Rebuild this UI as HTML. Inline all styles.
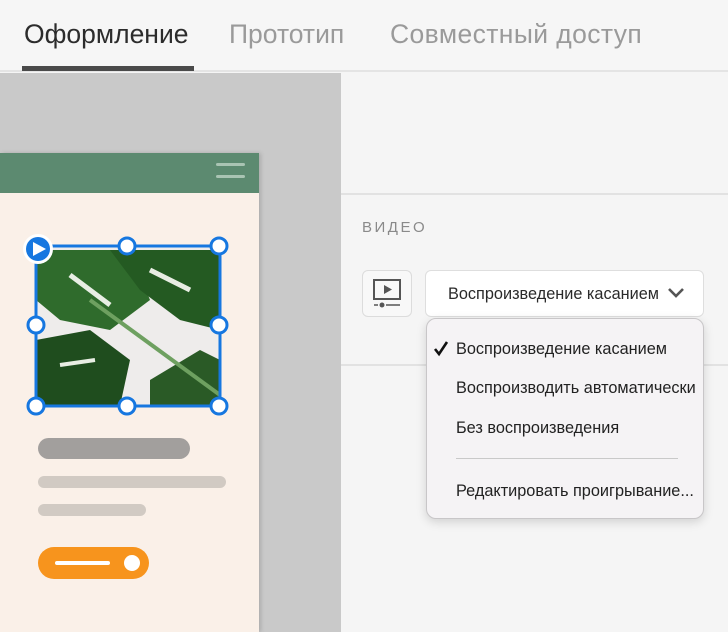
<!DOCTYPE html>
<html><head><meta charset="utf-8"><style>
*{margin:0;padding:0;box-sizing:border-box}
body{width:728px;height:632px;overflow:hidden;background:#f5f5f5;font-family:"Liberation Sans","DejaVu Sans",sans-serif;position:relative}
.abs{position:absolute}
.tab{position:absolute;top:19px;font-size:26.5px;color:#9a9a9a}
.mi{position:absolute;left:29px;font-size:16.3px;color:#222}
</style></head><body>
<div class="abs" style="left:0;top:0;width:728px;height:72px;background:#f6f6f6;border-bottom:2px solid #e4e4e4"></div>
<div class="tab" style="left:24px;color:#2c2c2c">Оформление</div>
<div class="tab" style="left:229px">Прототип</div>
<div class="tab" style="left:390px;letter-spacing:0.4px">Совместный доступ</div>
<div class="abs" style="left:22px;top:66px;width:172px;height:5px;background:#4a4a4a"></div>

<div class="abs" style="left:0;top:73px;width:341px;height:559px;background:#c9c9c9"></div>
<div class="abs" style="left:0;top:153px;width:259px;height:479px;background:#faf0e8;box-shadow:2px 0 4px rgba(0,0,0,.15)"></div>
<div class="abs" style="left:0;top:153px;width:259px;height:40px;background:#5c8a70"></div>
<div class="abs" style="left:216px;top:163px;width:29px;height:3px;border-radius:2px;background:#a9c4b3"></div>
<div class="abs" style="left:216px;top:175px;width:29px;height:3px;border-radius:2px;background:#a9c4b3"></div>

<svg class="abs" style="left:0;top:230px" width="260" height="195" viewBox="0 230 260 195">
<rect x="36" y="246" width="184" height="160" fill="#eeeceb"/>
<path d="M36 250 L130 250 L150 300 L110 330 L60 320 L36 300Z" fill="#2f6b2c"/>
<path d="M110 250 L220 250 L220 330 L180 320 L140 290Z" fill="#245a22"/>
<path d="M36 340 L90 330 L130 360 L120 406 L36 406Z" fill="#1f4d1e"/>
<path d="M150 380 L200 350 L220 360 L220 406 L150 406Z" fill="#2a5a26"/>
<path d="M90 300 L220 395" stroke="#6ea060" stroke-width="4"/>
<path d="M70 275 L110 305" stroke="#e8eee4" stroke-width="5"/>
<path d="M150 270 L190 290" stroke="#e8eee4" stroke-width="5"/>
<path d="M60 365 L95 360" stroke="#e8eee4" stroke-width="4"/>
<rect x="36" y="246" width="184" height="160" fill="none" stroke="#1677e0" stroke-width="3"/>
<g fill="#fff" stroke="#1677e0" stroke-width="3">
<circle cx="127" cy="246" r="8"/><circle cx="219" cy="246" r="8"/>
<circle cx="36" cy="325" r="8"/><circle cx="219" cy="325" r="8"/>
<circle cx="36" cy="406" r="8"/><circle cx="127" cy="406" r="8"/><circle cx="219" cy="406" r="8"/>
</g>
<circle cx="38" cy="249" r="15" fill="#fff"/><circle cx="38" cy="249" r="12" fill="#1677e0"/>
<path d="M33 242 L46 249 L33 256Z" fill="#fff"/>
</svg>

<div class="abs" style="left:38px;top:438px;width:152px;height:21px;border-radius:11px;background:#a29f9d"></div>
<div class="abs" style="left:38px;top:476px;width:188px;height:12px;border-radius:6px;background:#d1cac3"></div>
<div class="abs" style="left:38px;top:504px;width:108px;height:12px;border-radius:6px;background:#d1cac3"></div>
<div class="abs" style="left:38px;top:547px;width:111px;height:32px;border-radius:16px;background:#f7941d"></div>
<div class="abs" style="left:55px;top:561px;width:55px;height:4px;border-radius:2px;background:#fff"></div>
<div class="abs" style="left:124px;top:555px;width:16px;height:16px;border-radius:50%;background:#fff"></div>

<div class="abs" style="left:341px;top:193px;width:387px;height:2px;background:#e2e2e2"></div>
<div class="abs" style="left:341px;top:364px;width:387px;height:2px;background:#e2e2e2"></div>
<div class="abs" style="left:362px;top:219px;font-size:15px;letter-spacing:2.5px;color:#8a8a8a">ВИДЕО</div>
<div class="abs" style="left:362px;top:270px;width:50px;height:47px;border:1px solid #dcdcdc;border-radius:6px;background:#f8f8f8"></div>
<svg class="abs" style="left:370px;top:277px" width="34" height="34" viewBox="0 0 34 34">
<rect x="4" y="3" width="26" height="19" fill="none" stroke="#555" stroke-width="2"/>
<path d="M14 8 L22 12.5 L14 17Z" fill="#555"/>
<path d="M4 28 H8 M16 28 H30" stroke="#555" stroke-width="1.6"/>
<circle cx="12" cy="28" r="2.5" fill="#555"/>
</svg>
<div class="abs" style="left:425px;top:270px;width:279px;height:47px;border:1px solid #dedede;border-radius:6px;background:#fff"></div>
<div class="abs" style="left:448px;top:285px;font-size:16.3px;color:#2a2a2a">Воспроизведение касанием</div>
<svg class="abs" style="left:667px;top:286px" width="18" height="14"><path d="M2 3 L9 10 L16 3" fill="none" stroke="#555" stroke-width="2.6"/></svg>

<div class="abs" style="left:426px;top:318px;width:278px;height:201px;border-radius:10px;background:#f5f3f5;border:1px solid #c8c6c8;box-shadow:0 3px 10px rgba(0,0,0,.15)">
<svg class="abs" style="left:6px;top:22px" width="16" height="16"><path d="M2 8 L6 13 L14 1" fill="none" stroke="#111" stroke-width="2.6"/></svg>
<div class="mi" style="top:21px">Воспроизведение касанием</div>
<div class="mi" style="top:60px">Воспроизводить автоматически</div>
<div class="mi" style="top:100px">Без воспроизведения</div>
<div class="abs" style="left:29px;top:139px;width:222px;height:1px;background:#c9c9c9"></div>
<div class="mi" style="top:163px">Редактировать проигрывание...</div>
</div>
</body></html>
